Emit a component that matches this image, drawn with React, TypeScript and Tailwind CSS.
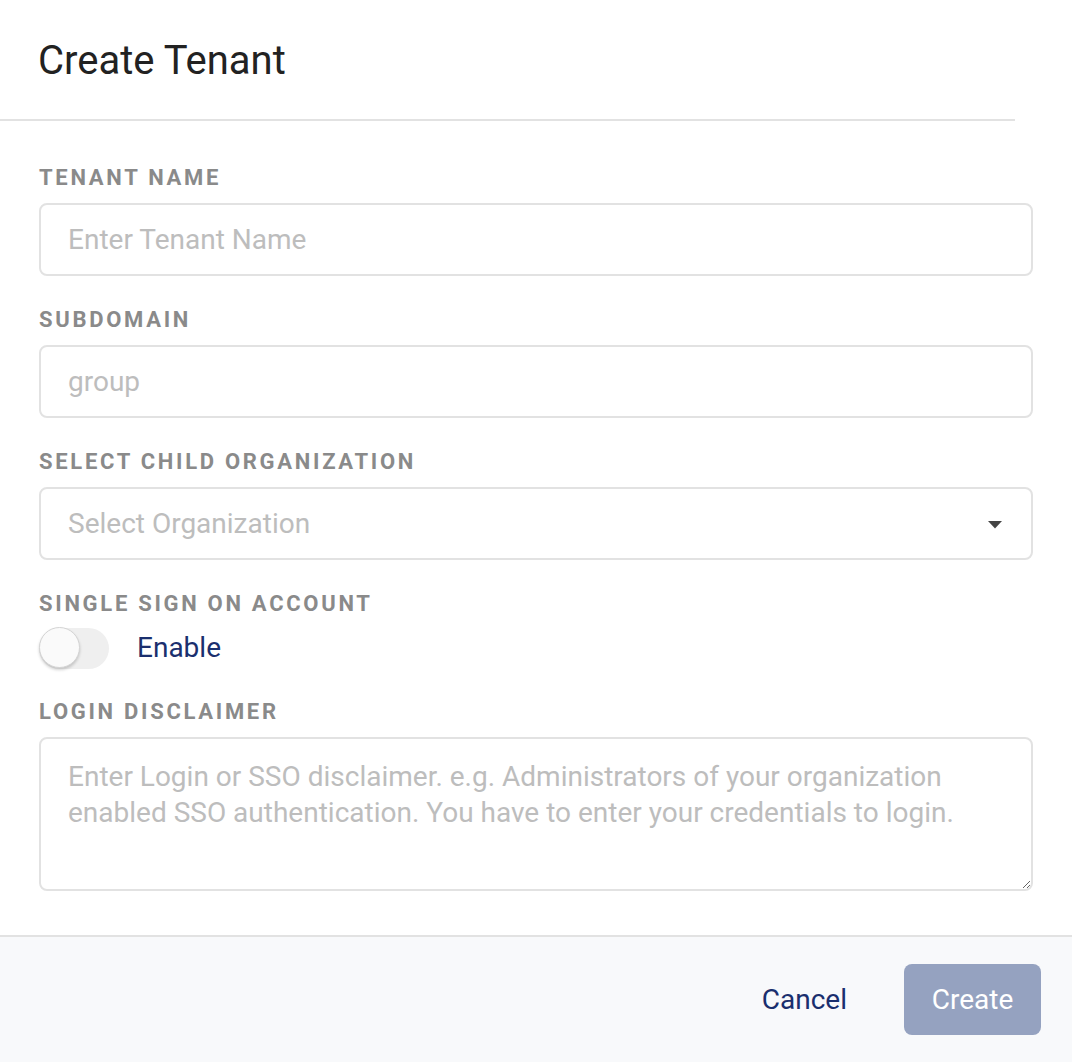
import React from "react";

const labelCls =
  "block h-[24px] text-[22px] leading-[24px] font-bold tracking-[2.7px] text-[#8a8a8a] uppercase whitespace-nowrap";
const inputCls =
  "block w-full h-[73px] rounded-[8px] border-2 border-[#e2e2e2] bg-white px-[27px] text-[28px] text-[#333] placeholder:text-[#bdbdbd] outline-none";

export default function App() {
  return (
    <div
      className="w-[1072px] h-[1062px] bg-white flex flex-col overflow-hidden"
      style={{ fontFamily: "Roboto, 'Noto Sans', sans-serif" }}
    >
      <div className="w-[1015px] border-b-2 border-[#e2e2e2] pt-[37px] pb-[34px] pl-[38px]">
        <h1 className="text-[40px] leading-[48px] font-normal text-[#222]">Create Tenant</h1>
      </div>

      <div className="flex-1 pl-[39px] pr-[39px] pt-[45px] flex flex-col">
        <label className={labelCls}>Tenant Name</label>
        <input className={inputCls + " mt-[13px]"} placeholder="Enter Tenant Name" />

        <label className={labelCls + " mt-[32px]"}>Subdomain</label>
        <input className={inputCls + " mt-[13px]"} placeholder="group" />

        <label className={labelCls + " mt-[32px]"}>Select Child Organization</label>
        <div className="mt-[13px] relative w-full h-[73px] rounded-[8px] border-2 border-[#e2e2e2] bg-white flex items-center px-[27px]">
          <span className="text-[28px] text-[#bdbdbd]">Select Organization</span>
          <svg
            className="absolute right-[29px] top-[32px]"
            width="14"
            height="8"
            viewBox="0 0 14 8"
          >
            <path d="M0 0 L14 0 L7 7.5 Z" fill="#444" />
          </svg>
        </div>

        <label className={labelCls + " mt-[32px]"}>Single Sign On Account</label>
        <div className="mt-[11px] flex items-center h-[42px]">
          <div className="relative w-[70px] h-[41px] rounded-full bg-[#efefef]">
            <div className="absolute left-0 top-[-1px] w-[41px] h-[41px] rounded-full bg-[#fafafa] border border-[#d4d4d4] shadow-[0_2px_3px_rgba(0,0,0,0.18)]" />
          </div>
          <span className="ml-[28px] text-[28px] text-[#1a2f6e]">Enable</span>
        </div>

        <label className={labelCls + " mt-[31px]"}>Login Disclaimer</label>
        <textarea
          className="block mt-[13px] w-full h-[154px] rounded-[8px] border-2 border-[#e2e2e2] bg-white px-[27px] pt-[20px] text-[28px] leading-[36px] text-[#333] placeholder:text-[#bdbdbd] outline-none resize-y"
          placeholder="Enter Login or SSO disclaimer. e.g. Administrators of your organization enabled SSO authentication. You have to enter your credentials to login."
        />
      </div>

      <div className="h-[127px] border-t-2 border-[#e2e2e2] bg-[#f8f9fb] flex items-center justify-end pr-[31px]">
        <button className="text-[28px] text-[#1a2f6e] mr-[57px]">Cancel</button>
        <button className="w-[137px] h-[71px] rounded-[8px] bg-[#95a2c0] text-white text-[28px]">
          Create
        </button>
      </div>
    </div>
  );
}
